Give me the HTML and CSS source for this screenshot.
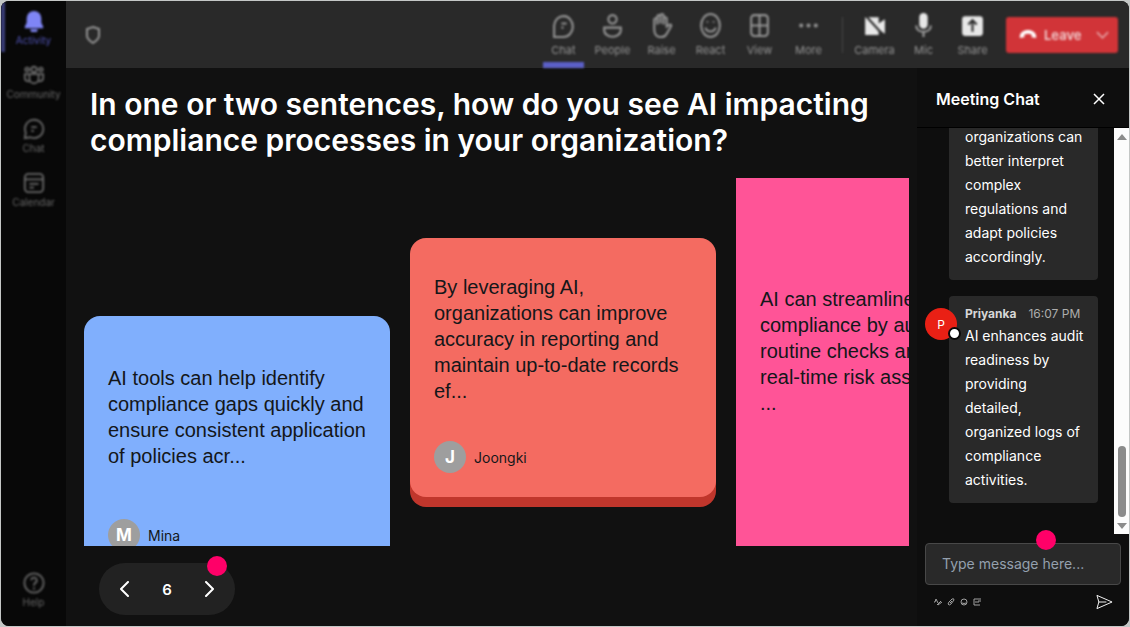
FILE: index.html
```html
<!DOCTYPE html>
<html lang="en">
<head>
<meta charset="utf-8">
<title>Meeting</title>
<link rel="stylesheet" href="styles.css">
</head>
<body>
<div class="app">
  <nav class="rail" aria-label="Main">
    <button class="rail-item active">
      <svg class="icon" viewBox="0 0 24 24" fill="currentColor"><path d="M12 1a8 8 0 0 0-8 8v5l-2 4v2h20v-2l-2-4V9a8 8 0 0 0-8-8zM8 21a4 4 0 0 0 8 0z"/></svg>
      <span>Activity</span>
    </button>
    <button class="rail-item">
      <svg class="icon" viewBox="0 0 24 24"><circle cx="12" cy="6" r="3"/><circle cx="4.500" cy="6" r="2"/><circle cx="19.500" cy="6" r="2"/><path d="M7 11h10v5a5 5 0 0 1-10 0zM7 11H2v4c0 3 2 4 5 4M17 11h5v4c0 3-2 4-5 4"/></svg>
      <span>Community</span>
    </button>
    <button class="rail-item">
      <svg class="icon" viewBox="0 0 24 24"><path d="M2 22l1-6a10 10 0 1 1 5 5zM9 10h6M9 14h3"/></svg>
      <span>Chat</span>
    </button>
    <button class="rail-item">
      <svg class="icon" viewBox="0 0 24 24"><rect x="2" y="2" width="20" height="20" rx="4"/><path d="M2 8h20M7 13h10M7 17h5"/></svg>
      <span>Calendar</span>
    </button>
    <button class="rail-item rail-help">
      <svg class="icon" viewBox="0 0 24 24"><circle cx="12" cy="12" r="10.500"/><path d="M9 9a3 3 0 1 1 4 3q-1 1-1 3M12 17v2"/></svg>
      <span>Help</span>
    </button>
  </nav>

  <div class="workspace">
    <header class="toolbar">
      <svg class="shield" viewBox="0 0 16 20"><path d="M8 2l6 2v7c0 3-3 5-6 7-3-2-6-4-6-7V4z"/></svg>
      <div class="tools">
        <button class="tool selected"><svg class="icon" viewBox="0 0 24 24"><path d="M3 23V12a9 10 0 1 1 9 11zM10 10h5M10 14h2"/></svg><span>Chat</span></button>
        <button class="tool"><svg class="icon" viewBox="0 0 24 24"><circle cx="12" cy="6" r="4"/><path d="M4 14h16v2c0 9-16 9-16 0z"/></svg><span>People</span></button>
        <button class="tool"><svg class="icon" viewBox="0 0 24 24"><path d="M5 15V6q1.500-2 3 0V3q1.500-2 3 0V2q1.500-2 3 0v3q1.500-2 3 0v8l3-2q2 0 1 2l-4 7q-2 4-7 3-5-1-5-8zM8 6v5M11 4v6M14 4v7"/></svg><span>Raise</span></button>
        <button class="tool"><svg class="icon" viewBox="0 0 24 24"><ellipse cx="12" cy="12" rx="9" ry="11"/><path d="M7 14c2 5 8 5 10 0M9 8v1M15 8v1"/></svg><span>React</span></button>
        <button class="tool"><svg class="icon" viewBox="0 0 24 24"><rect x="4" y="2" width="16" height="20" rx="3"/><path d="M12 2v20M4 12h16"/></svg><span>View</span></button>
        <button class="tool"><svg class="icon" viewBox="0 0 24 24" fill="currentColor"><circle cx="5" cy="12" r="1"/><circle cx="12" cy="12" r="1"/><circle cx="19" cy="12" r="1"/></svg><span>More</span></button>
      </div>
      <div class="tools devices">
        <button class="tool"><svg class="icon solid" viewBox="0 0 24 24"><path d="M3 4h13v6l6-4v14l-6-4v5H3z"/><path class="slash" d="M2 1l21 23"/></svg><span>Camera</span></button>
        <button class="tool"><svg class="icon solid" viewBox="0 0 24 24"><rect x="8" y="0" width="8" height="15" rx="4"/><path class="line" d="M5 12c0 8 14 8 14 0M12 18v5"/></svg><span>Mic</span></button>
        <button class="tool"><svg class="icon solid" viewBox="0 0 24 24"><rect x="2" y="3" width="20" height="19" rx="3"/><path class="slash" d="M12 18V8M8 11l4-4 4 4"/></svg><span>Share</span></button>
      </div>
      <button class="leave">
        <svg class="phone" viewBox="0 0 20 12"><path d="M1 10C-1-2 21-2 19 10l-5-1V6c-3-1-5-1-8 0v3z"/></svg>
        <span>Leave</span>
        <svg class="caret" viewBox="0 0 14 8"><path d="M1 1l6 6 6-6"/></svg>
      </button>
    </header>

    <div class="content">
      <main class="stage">
        <h1 class="question">In one or two sentences, how do you see AI impacting compliance processes in your organization?</h1>
        <div class="board">
          <article class="card blue">
            <p class="answer">AI tools can help identify compliance gaps quickly and ensure consistent application of policies acr...</p>
            <div class="author"><span class="initial">M</span><span>Mina</span></div>
          </article>
          <article class="card coral">
            <p class="answer">By leveraging AI, organizations can improve accuracy in reporting and maintain up-to-date records ef...</p>
            <div class="author"><span class="initial">J</span><span>Joongki</span></div>
          </article>
          <article class="card pink">
            <p class="answer">AI can streamline<br>compliance by au<br>routine checks an<br>real-time risk ass<br>...</p>
          </article>
        </div>
        <div class="pager">
          <button class="page-button" aria-label="Previous"><svg viewBox="0 0 10 16"><path d="M9 1L2 8l7 7"/></svg></button>
          <span class="page-number">6</span>
          <button class="page-button" aria-label="Next"><svg viewBox="0 0 10 16"><path d="M1 1l7 7-7 7"/></svg></button>
          <i class="hotspot"></i>
        </div>
      </main>

      <aside class="chat">
        <div class="chat-header">
          <h2 class="chat-title">Meeting Chat</h2>
          <button class="close" aria-label="Close"><svg viewBox="0 0 12 12"><path d="M1 1l10 10M11 1L1 11"/></svg></button>
        </div>
        <div class="chat-body">
          <div class="messages">
            <div class="message">
              <p class="bubble cut">organizations can<br>better interpret<br>complex<br>regulations and<br>adapt policies<br>accordingly.</p>
            </div>
            <div class="message">
              <span class="avatar">P<i class="presence"></i></span>
              <div class="bubble">
                <div class="meta"><strong>Priyanka</strong><time>16:07 PM</time></div>
                <p class="text">AI enhances audit<br>readiness by<br>providing<br>detailed,<br>organized logs of<br>compliance<br>activities.</p>
              </div>
            </div>
          </div>
          <div class="scrollbar">
            <svg class="arrow" viewBox="0 0 10 8"><path d="M5 1l5 6H0z"/></svg>
            <i class="thumb"></i>
            <svg class="arrow" viewBox="0 0 10 8"><path d="M0 1h10L5 7z"/></svg>
          </div>
        </div>
        <form class="composer">
          <div class="field">
            <input class="message-input" type="text" aria-label="Message" placeholder="Type message here...">
            <i class="hotspot"></i>
          </div>
          <div class="actions">
            <button type="button" class="mini" aria-label="Format"><svg viewBox="0 0 8 8"><path d="M0 4h1l1-3 2 4M3 7l4-4M4 7l4-3"/></svg></button>
            <button type="button" class="mini" aria-label="Attach"><svg viewBox="0 0 8 8"><path d="M2 4l3-3q2-1 2 1L4 6Q2 8 1 6zM3 5l2-2"/></svg></button>
            <button type="button" class="mini" aria-label="Emoji"><svg viewBox="0 0 8 8"><circle cx="4" cy="4" r="3"/><path d="M2 5q2 1 4 0M3 3v0M5 3v0"/></svg></button>
            <button type="button" class="mini" aria-label="GIF"><svg viewBox="0 0 8 8"><path d="M8 1H1v6h6M2 4h2M5 5V3h3"/></svg></button>
            <button type="button" class="send" aria-label="Send"><svg viewBox="0 0 18 16"><path d="M1 1l16 7-16 7 2-7zM3 8h8"/></svg></button>
          </div>
        </form>
      </aside>
    </div>
  </div>
</div>
</body>
</html>
```
FILE: styles.css
```css
* { box-sizing: border-box; }
body {
  margin: 0;
  padding: 1px;
  height: 100vh;
  background: #c4c7c6;
  font-family: Inter, "Liberation Sans", sans-serif;
  color: #fff;
}
h1, h2, p { margin: 0; }
button { margin: 0; padding: 0; border: 0; background: none; color: inherit; font: inherit; }
svg { display: block; fill: none; stroke: currentColor; }

.app { display: flex; height: 100%; border-radius: 8px; overflow: hidden; background: #111; }

.rail { display: flex; flex-direction: column; width: 65px; flex: none; background: #080808; padding: 1px 0 8px; }
.rail-item {
  display: flex; flex-direction: column; align-items: center; gap: 2px;
  height: 54px; padding-top: 8px;
  font-size: 10px; line-height: 12px; color: #686868; filter: blur(1px);
}
.rail-item .icon { width: 22px; height: 22px; stroke-width: 2; }
.rail-item.active { color: #7f85f5; border-left: 4px solid #3a3d78; padding-right: 4px; height: 50px; margin-bottom: 4px; }
.rail-item.active .icon { fill: currentColor; stroke: none; }
.rail-item.active span { color: #4f52b2; }
.rail-help { margin-top: auto; }

.workspace { display: flex; flex-direction: column; flex: 1; min-width: 0; }

.toolbar { display: flex; align-items: center; height: 67px; flex: none; padding: 0 11px 0 19px; background: #292929; color: #949494; }
.toolbar > * { filter: blur(1px); }
.shield { width: 16px; height: 20px; stroke-width: 2; margin-right: auto; }
.tools { display: flex; gap: 8px; height: 100%; }
.tool {
  display: flex; flex-direction: column; align-items: center; gap: 5px;
  width: 41px; padding-top: 12px; border-bottom: 6px solid transparent;
  font-size: 11px; line-height: 14px;
}
.tool .icon { width: 25px; height: 25px; stroke-width: 2; }
.tool.selected { border-bottom-color: #5b5fc7; }
.devices { margin-left: 14px; padding-left: 11px; position: relative; }
.devices::before { content: ""; position: absolute; left: -1px; top: 16px; height: 36px; border-left: 1px solid #484848; }
.solid { fill: #e8e8e8; stroke: none; }
.solid .slash { stroke: #292929; }
.solid .line { fill: none; stroke: #a0a0a0; }
.leave {
  display: flex; align-items: center; gap: 7px;
  width: 112px; height: 36px; margin-left: 13px; padding: 0 9px 0 13px;
  border-radius: 3px; background: #d13438; color: #fff; font-size: 13px; font-weight: 600;
}
.phone { width: 18px; height: 11px; fill: #fff; stroke: none; }
.leave span { color: #f1cfd0; }
.caret { width: 13px; height: 8px; margin-left: auto; stroke: #e49a9c; stroke-width: 2; }

.content { display: flex; flex: 1; min-height: 0; }
.stage { display: flex; flex-direction: column; flex: 1; min-width: 0; padding: 18px 8px 11px 18px; }
.question { padding-left: 6px; max-width: 800px; font-size: 30px; line-height: 36px; font-weight: 600; }

.board { display: flex; gap: 20px; flex: 1; min-height: 0; margin-top: 20px; overflow: hidden; color: #14171a; }
.card { display: flex; flex-direction: column; flex: none; width: 306px; height: 259px; padding: 24px; border-radius: 16px; }
.blue { margin-top: 138px; background: #80affd; }
.coral { margin-top: 60px; background: #f46b61; box-shadow: 0 10px 0 #c0362c; }
.pink { margin-top: -26px; height: 455px; padding-bottom: 81px; background: #ff5497; }
.answer { margin: auto 0; font-family: "Liberation Sans", Arial, sans-serif; font-size: 20px; line-height: 26px; }
.author { display: flex; align-items: center; gap: 8px; margin-top: 25px; font-size: 14px; }
.initial { display: grid; place-items: center; width: 32px; height: 32px; border-radius: 50%; background: #9e9e9e; color: #fff; font-size: 17px; font-weight: 700; }

.pager {
  position: relative; display: flex; align-items: center; justify-content: space-between; flex: none;
  width: 136px; height: 52px; margin: 17px 0 0 15px; padding: 0 20px; border-radius: 26px; background: #222;
}
.page-number { font-size: 15px; font-weight: 600; }
.page-button svg { width: 10px; height: 16px; stroke-width: 2; stroke-linecap: round; stroke-linejoin: round; }
.hotspot { position: absolute; width: 20px; height: 20px; border-radius: 50%; background: #ff0068; }
.pager .hotspot { top: -7px; right: 8px; }

.chat { display: flex; flex-direction: column; flex: none; width: 212px; background: #0e0e0e; }
.chat-header { display: flex; align-items: center; justify-content: space-between; height: 60px; flex: none; padding: 2px 24px 0 19px; border-bottom: 1px solid #000; }
.chat-title { font-size: 16px; line-height: 24px; font-weight: 600; }
.close svg { width: 12px; height: 12px; stroke-width: 1.5; }
.chat-body { display: flex; flex: 1; min-height: 0; }
.messages { display: flex; flex-direction: column; justify-content: flex-end; gap: 16px; flex: 1; min-height: 0; padding: 0 16px 31px 8px; overflow: hidden; }
.message { position: relative; flex: none; padding-left: 24px; }
.bubble { padding: 8px 12px 11px 16px; border-radius: 4px; background: #292929; font-size: 14px; line-height: 24px; white-space: nowrap; }
.cut { padding-top: 0; border-radius: 0 0 4px 4px; }
.meta { display: flex; gap: 12px; font-size: 12px; line-height: 20px; color: #d6d6d6; }
.meta time { color: #adadad; }
.avatar { position: absolute; left: 0; top: 12px; display: grid; place-items: center; width: 32px; height: 32px; border-radius: 50%; background: #e92015; font-size: 12px; }
.presence { position: absolute; right: -4px; bottom: 0; width: 13px; height: 13px; border: 2px solid #0a0a0a; border-radius: 50%; background: #fff; }
.scrollbar { display: flex; flex-direction: column; align-items: center; width: 15px; padding: 5px 0 4px; background: #fcfcfc; }
.arrow { width: 10px; height: 8px; fill: #8b8b8b; stroke: none; }
.thumb { width: 8px; height: 71px; margin-top: auto; margin-bottom: 5px; border-radius: 4px; background: #8b8b8b; }

.composer { flex: none; padding: 9px 8px 0; height: 92px; }
.field { position: relative; }
.message-input { display: block; width: 100%; height: 42px; padding: 0 16px 2px; border: 1px solid #484848; border-radius: 4px; background: #292929; color: #fff; font: 14px Inter, sans-serif; }
.message-input::placeholder { color: #94a0ae; opacity: 1; }
.field .hotspot { top: -13px; right: 65px; }
.actions { display: flex; align-items: center; gap: 5px; padding: 9px 8px 0 9px; }
.mini svg { width: 8px; height: 8px; stroke: #a0a0a0; stroke-width: 1; }
.send { margin-left: auto; }
.send svg { width: 17px; height: 16px; stroke-width: 1; stroke-linejoin: round; }
```
